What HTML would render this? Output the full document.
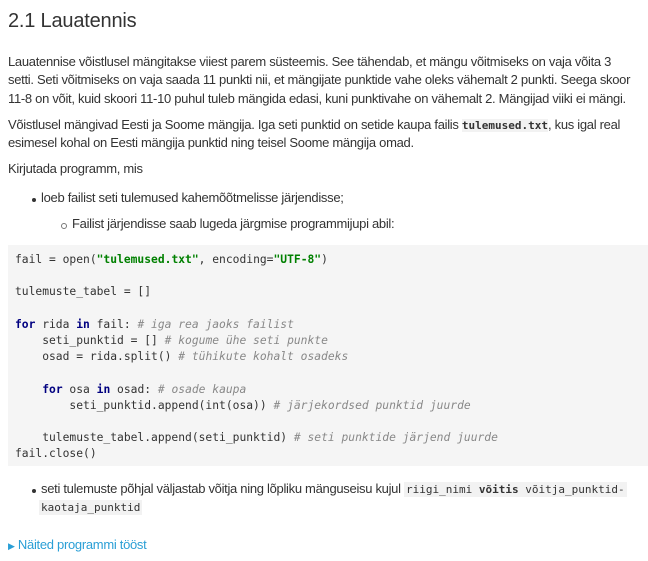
<!DOCTYPE html>
<html><head><meta charset="utf-8"><style>
body{margin:0;width:648px;height:561px;background:#fff;overflow:hidden;font-family:"Liberation Sans",sans-serif;color:#333;}
.t{position:absolute;white-space:nowrap;font-size:13px;letter-spacing:-0.3px;line-height:18px;}
h1{position:absolute;left:8px;top:10px;margin:0;font-weight:normal;font-size:20px;color:#333;letter-spacing:-0.2px;}
code,.m{font-family:"DejaVu Sans Mono",monospace;}
.ic{font-size:11px;background:#f2f2f2;letter-spacing:0;padding:1px 2px;}
.code{position:absolute;left:8px;top:245px;width:640px;height:221px;background:#f5f5f5;}
.code pre{margin:0;position:absolute;left:7px;top:7px;font-family:"DejaVu Sans Mono",monospace;font-size:11.3px;line-height:16.2px;color:#333;}
.k{color:#000080;font-weight:bold}.s{color:#008000;font-weight:bold}.c{color:#888;font-style:italic}
.dot{position:absolute;width:4px;height:4px;border-radius:50%;background:#333;}
.ring{position:absolute;width:4px;height:4px;border-radius:50%;border:1px solid #777;}
</style></head><body>
<h1>2.1 Lauatennis</h1>
<div class="t" style="left:8px;top:53px">Lauatennise võistlusel mängitakse viiest parem süsteemis. See tähendab, et mängu võitmiseks on vaja võita 3</div>
<div class="t" style="left:8px;top:71px">setti. Seti võitmiseks on vaja saada 11 punkti nii, et mängijate punktide vahe oleks vähemalt 2 punkti. Seega skoor</div>
<div class="t" style="left:8px;top:90px">11-8 on võit, kuid skoori 11-10 puhul tuleb mängida edasi, kuni punktivahe on vähemalt 2. Mängijad viiki ei mängi.</div>
<div class="t" style="left:8px;top:116px">Võistlusel mängivad Eesti ja Soome mängija. Iga seti punktid on setide kaupa failis <b class="m ic" style="padding:0">tulemused.txt</b>, kus igal real</div>
<div class="t" style="left:8px;top:134px">esimesel kohal on Eesti mängija punktid ning teisel Soome mängija omad.</div>
<div class="t" style="left:8px;top:160px">Kirjutada programm, mis</div>
<div class="dot" style="left:32px;top:198px"></div>
<div class="t" style="left:41px;top:189px">loeb failist seti tulemused kahemõõtmelisse järjendisse;</div>
<div class="ring" style="left:61px;top:223px"></div>
<div class="t" style="left:72px;top:215px">Failist järjendisse saab lugeda järgmise programmijupi abil:</div>
<div class="code"><pre>fail = open(<span class="s">"tulemused.txt"</span>, encoding=<span class="s">"UTF-8"</span>)

tulemuste_tabel = []

<span class="k">for</span> rida <span class="k">in</span> fail: <span class="c"># iga rea jaoks failist</span>
    seti_punktid = [] <span class="c"># kogume ühe seti punkte</span>
    osad = rida.split() <span class="c"># tühikute kohalt osadeks</span>

    <span class="k">for</span> osa <span class="k">in</span> osad: <span class="c"># osade kaupa</span>
        seti_punktid.append(int(osa)) <span class="c"># järjekordsed punktid juurde</span>

    tulemuste_tabel.append(seti_punktid) <span class="c"># seti punktide järjend juurde</span>
fail.close()</pre></div>
<div class="dot" style="left:32px;top:489px"></div>
<div class="t" style="left:41px;top:480px">seti tulemuste põhjal väljastab võitja ning lõpliku mänguseisu kujul <span class="m ic">riigi_nimi <b>võitis</b> võitja_punktid-</span></div>
<div class="t" style="left:39px;top:498px"><span class="m ic">kaotaja_punktid</span></div>
<div class="t" style="left:8px;top:536px;color:#2a9fd6"><span style="font-size:9px">▶</span> Näited programmi tööst</div>
</body></html>
